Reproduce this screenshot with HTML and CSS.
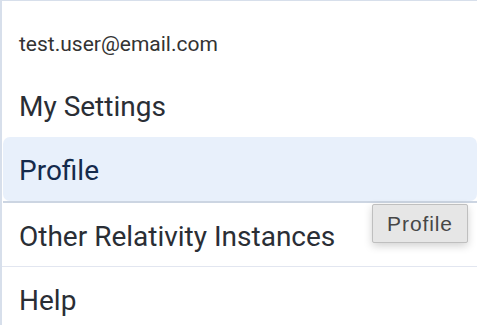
FILE: index.html
```html
<!DOCTYPE html>
<html lang="en">
<head>
    <meta charset="UTF-8">
    <meta name="viewport" content="width=device-width, initial-scale=1.0">
    <title>User Menu</title>
    <link rel="stylesheet" href="styles.css">
</head>
<body>
    <div class="user-menu">
        <div class="user-email">test.user@email.com</div>
        <ul class="menu-list">
            <li class="menu-item"><a href="#">My Settings</a></li>
            <li class="menu-item active"><a href="#">Profile</a></li>
            <li class="menu-item sep"><a href="#">Other Relativity Instances</a></li>
            <li class="menu-item"><a href="#">Help</a></li>
        </ul>
        <div class="tooltip">Profile</div>
    </div>
</body>
</html>
```

FILE: styles.css
```css
body {
    margin: 0;
    padding: 0;
    background: white;
    font-family: Roboto, "Liberation Sans", sans-serif;
    overflow: hidden;
}

.user-menu {
    position: relative;
    width: 475px;
    height: 330px;
    border-left: 2px solid #d7dfeb;
    border-top: 1px solid #d7dfeb;
}

.user-email {
    padding: 29px 0 15px 17px;
    font-size: 21px;
    line-height: 28px;
    color: #333;
}

.menu-list {
    list-style: none;
    margin: 0;
    padding: 0;
}

.menu-item a {
    display: block;
    padding: 4px 0 0 17px;
    height: 60px;
    line-height: 60px;
    font-size: 28px;
    color: #2a2e35;
    text-decoration: none;
}

.menu-item.active {
    border-bottom: 2px solid #ccd5e2;
    margin-left: 1px;
}

.menu-item.active a {
    padding-left: 16px;
    background-color: #e8f0fb;
    border-radius: 7px;
    color: #142a4c;
}

.menu-item.sep {
    border-bottom: 1.5px solid #e2e6f0;
}

.menu-item.sep a {
    height: 59px;
    line-height: 59px;
}

.tooltip {
    position: absolute;
    left: 370px;
    top: 203px;
    width: 94px;
    height: 37px;
    line-height: 37px;
    text-align: center;
    background: #e6e6e6;
    border: 1px solid #bfbfbf;
    border-radius: 2px;
    box-shadow: 0 3px 8px rgba(0, 0, 0, 0.18);
    font-family: "Liberation Sans", Arial, sans-serif;
    font-size: 21px;
    letter-spacing: 0.9px;
    color: #474747;
}
```
